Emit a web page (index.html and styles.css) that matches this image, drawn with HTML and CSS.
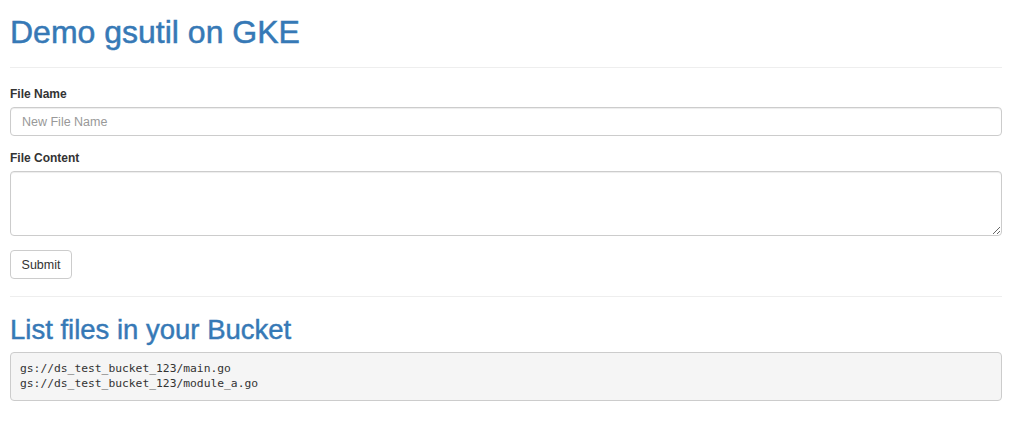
FILE: index.html
```html
<!DOCTYPE html>
<html lang="en">

<head>
    <meta charset="UTF-8">
    <meta name="viewport" content="width=device-width, initial-scale=1.0">
    <title>Demo gsutil on GKE</title>
    <link rel="stylesheet" href="styles.css">
</head>

<body>
    <div class="container">
        <h1 class="page-title">Demo gsutil on GKE</h1>
        <hr>
        <!-- upload form -->
        <form id="fileForm">
            <div class="form-group">
                <label for="file_name">File Name</label>
                <input type="text" id="file_name" name="file_name" placeholder="New File Name">
            </div>
            <div class="form-group">
                <label for="file_content">File Content</label>
                <textarea id="file_content" name="file_content" rows="3"></textarea>
            </div>
            <button type="submit" class="btn">Submit</button>
        </form>
        <hr>
        <h2 class="section-title">List files in your Bucket</h2>
        <pre class="file-list">gs://ds_test_bucket_123/main.go
gs://ds_test_bucket_123/module_a.go</pre>
    </div>
</body>

</html>
```

FILE: styles.css
```css
/* global */
body {
    font-family: "Liberation Sans", Arial, Helvetica, sans-serif;
    font-size: 12.5px;
    color: #333;
    background-color: #fff;
    margin: 0;
    padding: 0;
}

.container {
    padding: 0 22px 0 10px;
}

/* headings */
.page-title {
    font-size: 32px;
    font-weight: 500;
    line-height: 34px;
    color: #3679b6;
    -webkit-text-stroke: 0.5px #3679b6;
    margin: 15px 0 18px;
}

.section-title {
    font-size: 27.5px;
    font-weight: 500;
    line-height: 30px;
    color: #3679b6;
    -webkit-text-stroke: 0.45px #3679b6;
    margin: 17px 0 7px;
}

hr {
    border: 0;
    border-top: 1px solid #eee;
    margin: 0 0 18px;
    height: 0;
}

/* form */
.form-group {
    margin-bottom: 14px;
}

label {
    display: block;
    font-size: 12px;
    font-weight: bold;
    line-height: 17px;
    margin-bottom: 4px;
    color: #333;
}

input[type="text"],
textarea {
    display: block;
    width: 100%;
    box-sizing: border-box;
    font-family: inherit;
    font-size: 12.5px;
    color: #555;
    padding: 6px 11px;
    border: 1px solid #ccc;
    border-radius: 4px;
    box-shadow: inset 0 1px 1px rgba(0, 0, 0, 0.075);
    margin: 0;
}

input[type="text"] {
    height: 29px;
}

textarea {
    height: 65px;
}

input::placeholder {
    color: #999;
}

.btn {
    display: block;
    font-family: inherit;
    font-size: 12.5px;
    color: #333;
    background-color: #fff;
    border: 1px solid #ccc;
    border-radius: 4px;
    width: 62px;
    height: 29px;
    padding: 0;
    margin: 0 0 17px;
    cursor: pointer;
}

.btn:hover {
    background-color: #e6e6e6;
}

/* bucket listing */
.file-list {
    font-family: "DejaVu Sans Mono", "Liberation Mono", monospace;
    font-size: 11.3px;
    line-height: 15px;
    color: #333;
    background-color: #f5f5f5;
    border: 1px solid #ccc;
    border-radius: 4px;
    padding: 8px 9px 9px;
    margin: 0;
}
```
